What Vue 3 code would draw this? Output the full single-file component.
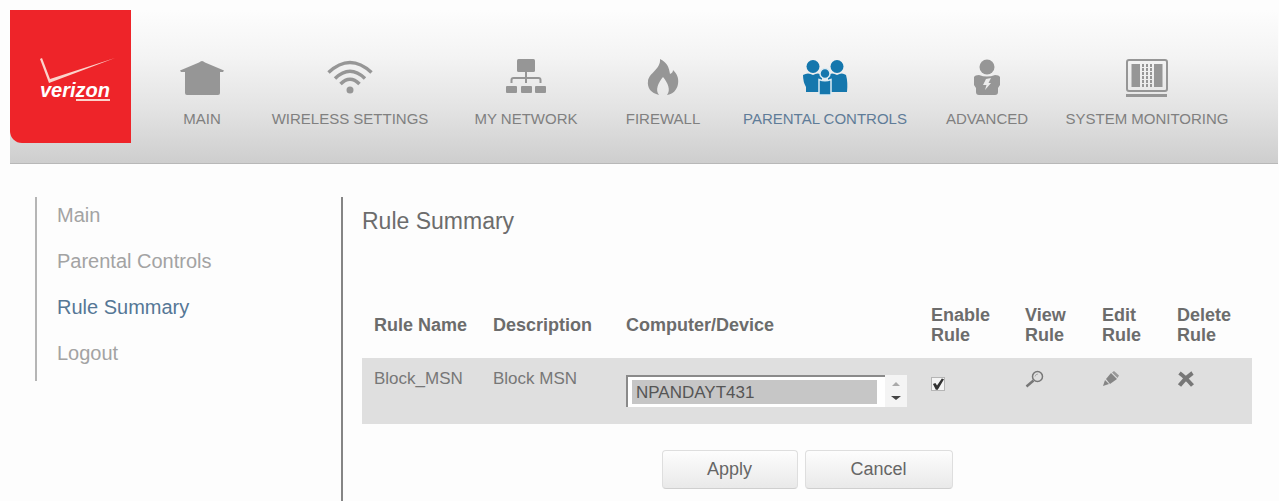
<script setup>
import {reactive, ref} from 'vue'

const navItems = [
  {id: "main", label: "MAIN"},
  {id: "wireless", label: "WIRELESS SETTINGS"},
  {id: "network", label: "MY NETWORK"},
  {id: "firewall", label: "FIREWALL"},
  {id: "parental", label: "PARENTAL CONTROLS"},
  {id: "advanced", label: "ADVANCED"},
  {id: "monitoring", label: "SYSTEM MONITORING"}
]

const menuItems = [
  {id: "main", label: "Main"},
  {id: "parental", label: "Parental Controls"},
  {id: "summary", label: "Rule Summary"},
  {id: "logout", label: "Logout"}
]

const navSel = ref("parental")
const menuSel = ref("summary")

const rules = reactive([
  {id: 1, name: "Block_MSN", description: "Block MSN", devices: ["NPANDAYT431"], device: "NPANDAYT431", enabled: true}
])

function removeRule(rule) {
  rules.splice(rules.indexOf(rule), 1)
}
</script>


<template>
  <div class="page">
    <header class="header">
      <a class="logo" href="#" aria-label="verizon">
        <svg class="logo-check" viewBox="0 0 76 26" aria-hidden="true">
          <path d="M0 1 L2 0 L10 21 L75 0 L9 25 Z" fill="#fbd3cb"/>
        </svg>
        <span class="logo-text">veri<span class="logo-zon">zon</span></span>
      </a>
      <nav class="nav">
        <a v-for="item in navItems" :key="item.id" href="#" class="nav-link"
           :class="{'active': item.id === navSel}" @click.prevent="navSel = item.id">
          <svg class="nav-icon" viewBox="0 0 46 40" fill="currentColor" aria-hidden="true">
            <g v-if="item.id === 'main'">
              <path d="M23 2 C24 2 25 2.500 26 3.500 L45 11.500 L44 13 H41 V34 Q41 36 39 36 H8 Q6 36 6 34 V13 H2 L1 11.500 L20 3.500 C21 2.500 22 2 23 2 Z"/>
            </g>
            <g v-else-if="item.id === 'wireless'" fill="none" stroke="currentColor" stroke-width="3.500">
              <path d="M1.500 13.500 Q23 -6.500 44.500 13.500"/>
              <path d="M8 19.500 Q23 5 38 19.500"/>
              <path d="M13.500 25 Q23 15.500 32.500 25"/>
              <circle cx="23" cy="31" r="3.500" fill="currentColor" stroke="none"/>
            </g>
            <g v-else-if="item.id === 'network'">
              <rect x="14" y="0" width="18" height="13" rx="1.500"/>
              <path d="M23 13 V24 M8.500 24 V21 Q8.500 19 10.500 19 H35.500 Q37.500 19 37.500 21 V24" fill="none" stroke="currentColor" stroke-width="2"/>
              <rect x="3" y="27" width="11" height="7" rx="1"/>
              <rect x="18" y="27" width="11" height="7" rx="1"/>
              <rect x="32" y="27" width="11" height="7" rx="1"/>
            </g>
            <g v-else-if="item.id === 'firewall'">
              <path d="M20 0 C28 4 29 9 30 15 C32 14 33 13 33 11 C37 15 39 19 38 25 C37 31 33 35 27 36 C31 31 28 24 23 18 C18 24 15 31 19 36 C11 34 7 29 8 22 C9 14 21 10 20 0 Z"/>
            </g>
            <g v-else-if="item.id === 'parental'">
              <circle cx="11" cy="7.500" r="6.500"/>
              <circle cx="35" cy="7.500" r="6.500"/>
              <path d="M1 16 Q6 13 11 16 Q16 13 20 16 V33 H4 V28 Q1 23 1 16 Z"/>
              <path d="M26 16 Q30 13 35 16 Q40 13 44 16 Q46 23 45 33 H26 Z"/>
              <g stroke="#dcebf3" stroke-width="1.500">
                <circle cx="23" cy="14.500" r="5"/>
                <path d="M17 20.500 Q23 23 29 20.500 V36 H17 Z"/>
              </g>
            </g>
            <g v-else-if="item.id === 'advanced'">
              <circle cx="23" cy="8" r="7.500"/>
              <path d="M10 18 Q11 16 15 16 Q23 19 31 16 Q35 16 36 18 V26 L34 29 V33 Q34 36 31 36 H15 Q12 36 12 33 V29 L10 26 Z"/>
              <path d="M22 20 L27 19 L24.500 24 H27 L21 31 L22.500 26 H19 Z" fill="#ececec"/>
            </g>
            <g v-else>
              <rect x="3" y="1" width="40" height="31" rx="2" fill="none" stroke="currentColor" stroke-width="2"/>
              <rect x="7.500" y="5" width="8.500" height="23"/>
              <rect x="30" y="5" width="8.500" height="23"/>
              <path d="M19 5 V28 M23 5 V28 M27 5 V28" fill="none" stroke="currentColor" stroke-width="2" stroke-dasharray="3 1"/>
              <path d="M2 36.500 H43" stroke="currentColor" stroke-width="3"/>
            </g>
          </svg>
          <span>{{ item.label }}</span>
        </a>
      </nav>
    </header>

    <div class="body">
      <aside class="sidebar">
        <nav class="menu">
          <a v-for="item in menuItems" :key="item.id" href="#" class="menu-link"
             :class="{'active': item.id === menuSel}" @click.prevent="menuSel = item.id">{{ item.label }}</a>
        </nav>
      </aside>

      <main class="content">
        <h1 class="title">Rule Summary</h1>
        <table class="rules">
          <thead>
            <tr>
              <th class="col-name">Rule Name</th>
              <th class="col-description">Description</th>
              <th>Computer/Device</th>
              <th class="col-enable">Enable<br>Rule</th>
              <th class="col-view">View<br>Rule</th>
              <th class="col-edit">Edit<br>Rule</th>
              <th class="col-delete">Delete<br>Rule</th>
            </tr>
          </thead>
          <tbody>
            <tr v-for="rule in rules" :key="rule.id">
              <td>{{ rule.name }}</td>
              <td>{{ rule.description }}</td>
              <td class="cell-device">
                <div class="listbox">
                  <select v-model="rule.device" size="2" class="listbox-select" aria-label="Computer/Device">
                    <option v-for="d in rule.devices" :key="d" :value="d">{{ d }}</option>
                  </select>
                  <svg class="listbox-arrows" viewBox="0 0 22 32" aria-hidden="true">
                    <path d="M7 11 L11 7 L15 11 Z" fill="#aaa"/>
                    <path d="M6 21 H16 L11 25 Z" fill="#444"/>
                  </svg>
                </div>
              </td>
              <td class="cell-enable">
                <input v-model="rule.enabled" type="checkbox" class="check" aria-label="Enable Rule">
              </td>
              <td>
                <button type="button" class="icon-button" aria-label="View Rule">
                  <svg viewBox="0 0 20 20" fill="none" stroke="#777">
                    <circle cx="12.500" cy="7.500" r="5" stroke-width="1.500"/>
                    <path d="M8.500 11.500 L1.500 17.500" stroke-width="2.500"/>
                    <path d="M10 7.500 Q10.500 5 13 5" stroke="#aaa"/>
                  </svg>
                </button>
              </td>
              <td>
                <button type="button" class="icon-button" aria-label="Edit Rule">
                  <svg viewBox="0 0 20 20" fill="#858585">
                    <path d="M1 17 L3 11 L7 15 Z"/>
                    <path d="M4 10 L9 4 L15 10 L8 15 Z"/>
                    <path d="M10 3.500 L12 2 L17 6.500 L15.500 9 Z" fill="#999"/>
                  </svg>
                </button>
              </td>
              <td>
                <button type="button" class="icon-button" aria-label="Delete Rule" @click="removeRule(rule)">
                  <svg viewBox="0 0 20 20" fill="none" stroke="#777">
                    <path d="M2.500 4 Q8 8 15.500 16.500 M15.500 4 Q8 9 2.500 16.500" stroke-width="4"/>
                  </svg>
                </button>
              </td>
            </tr>
          </tbody>
        </table>
        <div class="actions">
          <button type="button" class="button">Apply</button>
          <button type="button" class="button button-wide">Cancel</button>
        </div>
      </main>
    </div>
  </div>
</template>

<style>
body {
  background: #fdfdfd;
}
</style>

<style scoped>
.page {
  display: flex;
  flex-direction: column;
  box-sizing: border-box;
  min-height: 100vh;
  padding: 10px 1px 0 10px;
  font-family: "Liberation Sans", Arial, sans-serif;
  font-size: 17px;
  line-height: 20px;
  color: #777;
}

a {
  text-decoration: none;
}

.header {
  display: flex;
  align-items: flex-start;
  padding-bottom: 20px;
  border-bottom: 1px solid #b8b8b8;
  background: linear-gradient(#fdfdfd 0%, #f4f4f4 30%, #e3e3e3 65%, #cecece 100%);
}

.logo {
  display: flex;
  flex: none;
  flex-direction: column;
  box-sizing: border-box;
  width: 121px;
  height: 133px;
  padding: 48px 0 0 30px;
  border-radius: 0 0 0 12px;
  background: #ee2429;
}

.logo-check {
  width: 76px;
  height: 26px;
}

.logo-text {
  margin-top: -4px;
  font-size: 20px;
  font-weight: bold;
  font-style: italic;
  line-height: 20px;
  color: #fff;
}

.logo-zon {
  display: inline-block;
  border-bottom: 2px solid #fbd3cb;
  line-height: 18px;
}

.nav {
  display: grid;
  flex: 1;
  grid-template-columns: 92fr 204fr 148fr 126fr 198fr 126fr 194fr;
  padding: 49px 34px 0 25px;
}

.nav-link {
  display: flex;
  flex-direction: column;
  align-items: center;
  gap: 10px;
  font-size: 15px;
  white-space: nowrap;
  color: #808080;
}

.nav-icon {
  width: 46px;
  height: 40px;
  color: #969696;
}

.nav-link.active {
  color: #5f7c98;
}

.nav-link.active .nav-icon {
  color: #1577ad;
}

.body {
  display: flex;
  flex: 1;
  padding: 33px 26px 0 25px;
}

.sidebar {
  flex: none;
  width: 306px;
}

.menu {
  display: flex;
  flex-direction: column;
  gap: 22px;
  padding: 6px 0 16px 20px;
  border-left: 2px solid #b5b5b5;
  font-size: 20px;
  line-height: 24px;
}

.menu-link {
  color: #a3a3a3;
}

.menu-link.active {
  color: #557796;
}

.content {
  flex: 1;
  padding-left: 19px;
  border-left: 2px solid #858585;
}

.title {
  margin: 10px 0 70px;
  font-size: 23px;
  font-weight: normal;
  line-height: 28px;
  color: #6c6c6c;
}

.rules {
  width: 100%;
  border-collapse: collapse;
  table-layout: fixed;
}

.rules th {
  padding: 0 0 13px 12px;
  font-size: 18px;
  text-align: left;
  white-space: nowrap;
  color: #6c6c6c;
}

.rules td {
  box-sizing: border-box;
  height: 66px;
  padding: 11px 0 0 12px;
  vertical-align: top;
  background: #dfdfdf;
}

.col-name {
  width: 107px;
}

.col-description {
  width: 121px;
}

.col-enable {
  width: 82px;
}

.col-view {
  width: 65px;
}

.col-edit {
  width: 63px;
}

.col-delete {
  width: 75px;
}

.rules .cell-device {
  padding: 17px 12px 0;
}

.rules .cell-enable {
  padding-top: 19px;
}

.listbox {
  display: flex;
  height: 32px;
  background: #fff;
}

.listbox-select {
  flex: 1;
  box-sizing: border-box;
  min-width: 0;
  height: 32px;
  padding: 3px 8px 3px 4px;
  border: 0 solid #8a8a8a;
  border-width: 2px 0 0 2px;
  border-radius: 0;
  outline: none;
  overflow: hidden;
  background: #fff;
  font-family: inherit;
  font-size: 17px;
}

.listbox-select option {
  box-sizing: border-box;
  height: 24px;
  min-height: 24px;
  padding: 3px 4px 0;
  color: #555;
}

.listbox-select option:checked {
  background: #c6c6c6 linear-gradient(#c6c6c6, #c6c6c6);
}

.listbox-arrows {
  flex: none;
  width: 22px;
  height: 32px;
  background: #f4f4f4;
}

.check {
  display: grid;
  box-sizing: border-box;
  width: 14px;
  height: 14px;
  margin: 0;
  appearance: none;
  border: 1px solid #b5b5b5;
  background: #f4f4f4;
}

.check:checked::before {
  content: "";
  background: #333;
  clip-path: polygon(8% 50%, 28% 42%, 42% 62%, 82% 4%, 100% 10%, 48% 98%, 32% 98%);
}

.icon-button {
  display: block;
  width: 20px;
  height: 20px;
  padding: 0;
  border: none;
  background: none;
  cursor: pointer;
}

.icon-button svg {
  display: block;
  width: 20px;
  height: 20px;
}

.actions {
  display: flex;
  justify-content: center;
  gap: 7px;
  margin-top: 26px;
}

.button {
  width: 136px;
  height: 39px;
  padding: 0;
  border: 1px solid #dedede;
  border-bottom-color: #cfcfcf;
  border-radius: 4px;
  background: linear-gradient(#fdfdfd, #e9e9e9);
  font-family: inherit;
  font-size: 18px;
  color: #666;
  cursor: pointer;
}

.button-wide {
  width: 148px;
}
</style>
